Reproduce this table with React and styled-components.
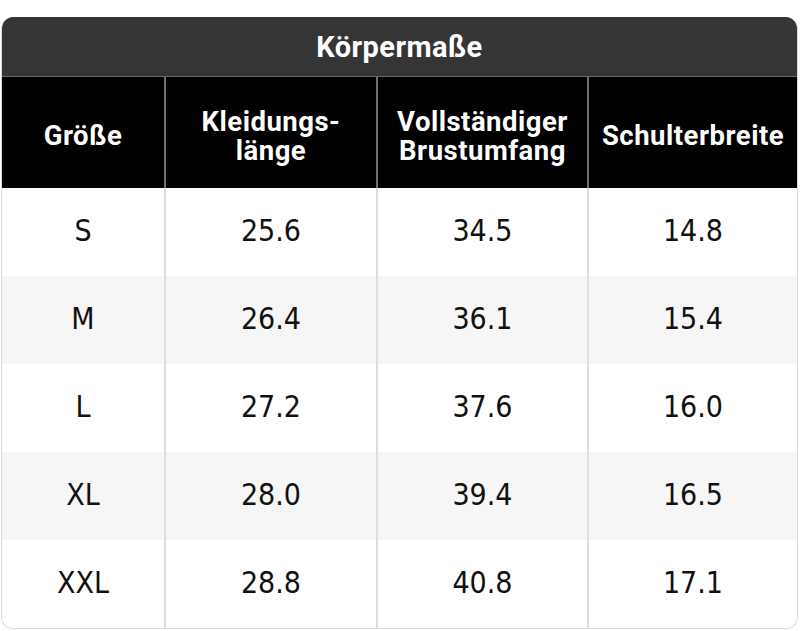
import React from "react";
import styled, { createGlobalStyle } from "styled-components";

const GlobalStyle = createGlobalStyle`
  html, body {
    margin: 0;
    padding: 0;
    background: #fff;
  }
`;

const columns = ["Größe", "Kleidungs-\nlänge", "Vollständiger\nBrustumfang", "Schulterbreite"];

const rows = [
  ["S", "25.6", "34.5", "14.8"],
  ["M", "26.4", "36.1", "15.4"],
  ["L", "27.2", "37.6", "16.0"],
  ["XL", "28.0", "39.4", "16.5"],
  ["XXL", "28.8", "40.8", "17.1"],
];

const App = () => {
  return (
    <>
      <GlobalStyle />
      <Page>
        <Chart>
          <Title>Körpermaße</Title>
          <HeadRow>
            {columns.map((c) => (
              <HeadCell key={c}>{c}</HeadCell>
            ))}
          </HeadRow>
          {rows.map((r, i) => (
            <BodyRow key={r[0]} $striped={i % 2 === 1}>
              {r.map((v, j) => (
                <BodyCell key={j}>{v}</BodyCell>
              ))}
            </BodyRow>
          ))}
        </Chart>
      </Page>
    </>
  );
};

export default App;

const Page = styled.div`
  padding: 17px 2px 2px 1px;
`;

const Chart = styled.div`
  width: 797px;
  border-radius: 12px;
  overflow: hidden;
  border: 1px solid #d9d9d9;
  border-top: none;
  box-sizing: border-box;
`;

const Title = styled.div`
  height: 59px;
  background: #353535;
  border-bottom: 1px solid #6a6a6a;
  color: #fff;
  font-family: Roboto, "Liberation Sans", sans-serif;
  font-weight: 700;
  font-size: 29px;
  letter-spacing: 0.4px;
  display: flex;
  justify-content: center;
  align-items: center;
`;

const grid = `
  display: grid;
  grid-template-columns: 162px 212px 211px 1fr;
`;

const HeadRow = styled.div`
  ${grid}
  height: 111px;
  background: #000;
`;

const HeadCell = styled.div`
  display: flex;
  align-items: center;
  justify-content: center;
  text-align: center;
  white-space: pre-line;
  padding-top: 6px;
  color: #fff;
  font-family: Roboto, "Liberation Sans", sans-serif;
  font-weight: 700;
  font-size: 27.5px;
  line-height: 29px;
  letter-spacing: 0.5px;
  & + & {
    border-left: 2px solid #6f6f6f;
  }
`;

const BodyRow = styled.div`
  ${grid}
  height: 88px;
  background: ${(p) => (p.$striped ? "#f6f6f6" : "#fff")};
`;

const BodyCell = styled.div`
  display: flex;
  align-items: center;
  justify-content: center;
  padding-bottom: 3px;
  color: #111;
  font-family: "DejaVu Sans Condensed", "DejaVu Sans", sans-serif;
  font-stretch: condensed;
  font-size: 30px;
  & + & {
    border-left: 2px solid #dedede;
  }
`;
